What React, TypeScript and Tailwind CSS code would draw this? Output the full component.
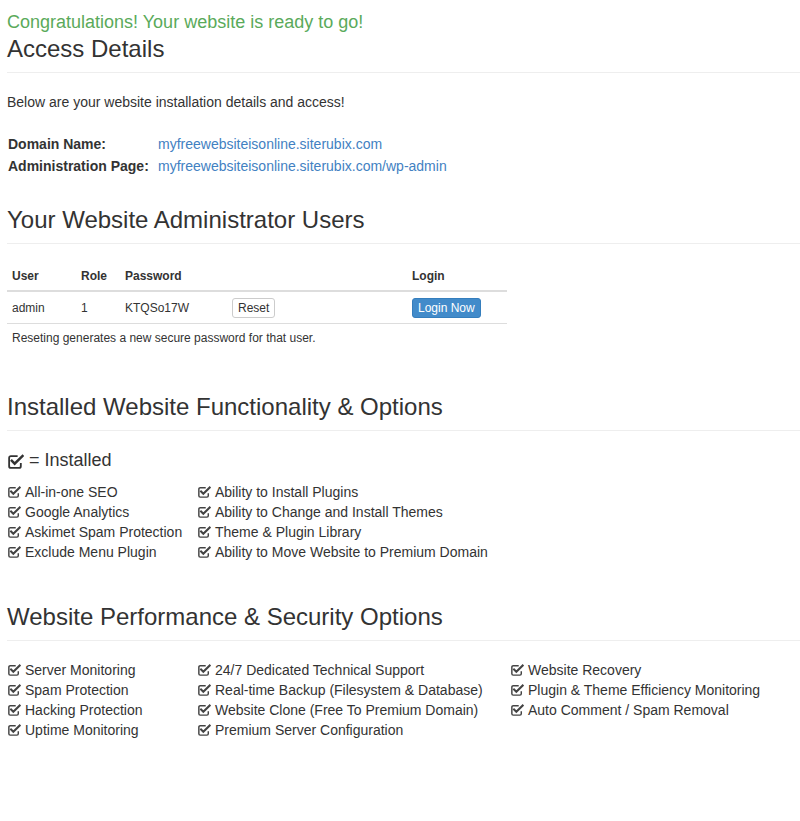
import type { ReactNode } from "react";

// square-with-check, in the style of font-awesome's check-square-o
function CheckSquare({ className = "" }: { className?: string }) {
  return (
    <svg viewBox="0 0 16 14" className={className} fill="none" stroke="currentColor">
      <path
        d="M10 2H3.6A1.6 1.6 0 0 0 2 3.6v7.8A1.6 1.6 0 0 0 3.6 13h7.8a1.6 1.6 0 0 0 1.6-1.6V8.5"
        strokeWidth="1.7"
      />
      <path d="M4.6 6.4l2.6 2.6L14.6 1.8" strokeWidth="2.4" strokeLinecap="square" />
    </svg>
  );
}

function SectionTitle({ children, className = "" }: { children: ReactNode; className?: string }) {
  return (
    <div className={className}>
      <h3 className="text-[24px] leading-[26px] text-[#333]">{children}</h3>
      <hr className="mt-[10px] border-t border-[#eee]" />
    </div>
  );
}

function Item({ children }: { children: ReactNode }) {
  return (
    <li className="flex h-5 items-center whitespace-nowrap">
      <CheckSquare className="mr-[4px] h-[12px] w-[14px] text-[#444]" />
      {children}
    </li>
  );
}

function Column({ items, className = "" }: { items: string[]; className?: string }) {
  return (
    <ul className={className}>
      {items.map((t) => (
        <Item key={t}>{t}</Item>
      ))}
    </ul>
  );
}

export default function App() {
  return (
    <div className="min-h-[821px] bg-white pl-[7px] pt-[12px] font-['Liberation_Sans',Arial,sans-serif] text-[14px] text-[#333]">
      <div className="text-[18px] leading-[20px] text-[#5aaa5a]">
        Congratulations! Your website is ready to go!
      </div>

      <SectionTitle className="mt-[4px]">Access Details</SectionTitle>
      <p className="mt-[19px] leading-[20px]">Below are your website installation details and access!</p>

      <div className="mt-[21px] grid grid-cols-[151px_1fr] leading-[22px]">
        <span className="pl-[1px] font-bold">Domain Name:</span>
        <a className="text-[#4281c2]">myfreewebsiteisonline.siterubix.com</a>
        <span className="pl-[1px] font-bold">Administration Page:</span>
        <a className="text-[#4281c2]">myfreewebsiteisonline.siterubix.com/wp-admin</a>
      </div>

      <SectionTitle className="mt-[30px]">Your Website Administrator Users</SectionTitle>

      <div className="mt-[17px] w-[500px] text-[12px]">
        <div className="grid h-[31px] grid-cols-[69px_44px_107px_180px_100px] items-center border-b-2 border-[#ddd] font-bold">
          <span className="pl-[5px]">User</span>
          <span className="pl-[5px]">Role</span>
          <span className="pl-[5px]">Password</span>
          <span />
          <span className="pl-[5px]">Login</span>
        </div>
        <div className="grid h-[32px] grid-cols-[69px_44px_107px_180px_100px] items-center border-b border-[#ddd]">
          <span className="pl-[5px]">admin</span>
          <span className="pl-[5px]">1</span>
          <span className="pl-[5px]">KTQSo17W</span>
          <span className="pl-[5px]">
            <button className="rounded-[3px] border border-[#ccc] bg-white px-[5px] leading-[18px] text-[#333]">
              Reset
            </button>
          </span>
          <span className="pl-[5px]">
            <button className="rounded-[3px] border border-[#357ebd] bg-[#428bca] px-[5px] leading-[18px] text-white">
              Login Now
            </button>
          </span>
        </div>
        <p className="pl-[5px] pt-[6px] leading-[17px]">Reseting generates a new secure password for that user.</p>
      </div>

      <SectionTitle className="mt-[47px]">Installed Website Functionality &amp; Options</SectionTitle>

      <div className="mt-[19px] flex items-center text-[18px] leading-[20px]">
        <CheckSquare className="mr-[5px] mt-[3px] h-[15px] w-[17px] text-[#333]" />= Installed
      </div>

      <div className="mt-[12px] flex">
        <Column
          className="w-[190px]"
          items={["All-in-one SEO", "Google Analytics", "Askimet Spam Protection", "Exclude Menu Plugin"]}
        />
        <Column
          items={[
            "Ability to Install Plugins",
            "Ability to Change and Install Themes",
            "Theme & Plugin Library",
            "Ability to Move Website to Premium Domain",
          ]}
        />
      </div>

      <SectionTitle className="mt-[42px]">Website Performance &amp; Security Options</SectionTitle>

      <div className="mt-[19px] flex">
        <Column
          className="w-[190px]"
          items={["Server Monitoring", "Spam Protection", "Hacking Protection", "Uptime Monitoring"]}
        />
        <Column
          className="w-[313px]"
          items={[
            "24/7 Dedicated Technical Support",
            "Real-time Backup (Filesystem & Database)",
            "Website Clone (Free To Premium Domain)",
            "Premium Server Configuration",
          ]}
        />
        <Column
          items={["Website Recovery", "Plugin & Theme Efficiency Monitoring", "Auto Comment / Spam Removal"]}
        />
      </div>
    </div>
  );
}
